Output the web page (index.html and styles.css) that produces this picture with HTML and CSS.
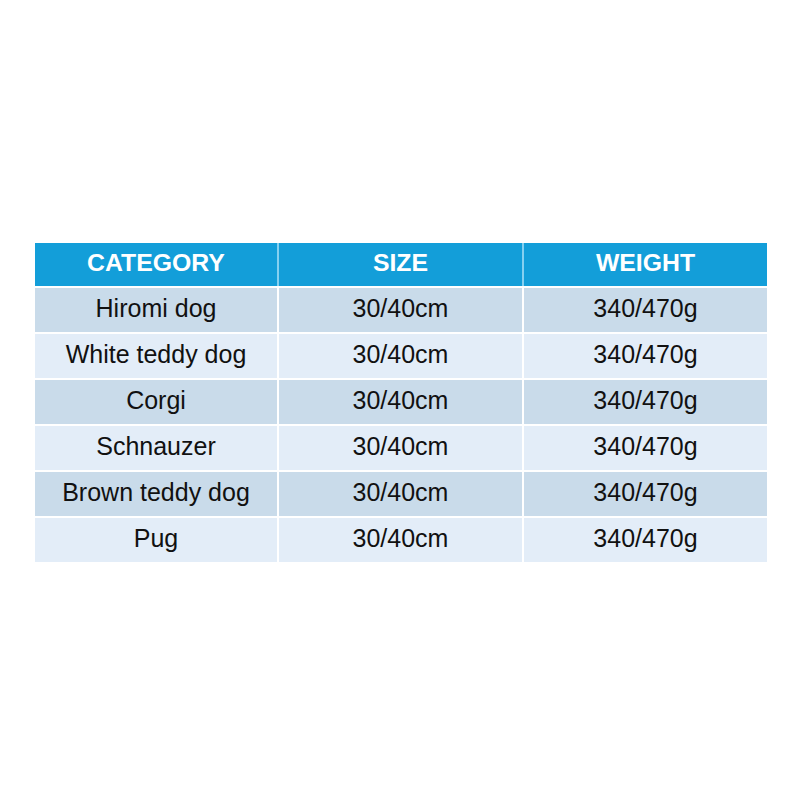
FILE: index.html
```html
<!DOCTYPE html>
<html>
<head>
<meta charset="utf-8">
<link rel="stylesheet" href="styles.css">
</head>
<body>
<div class="page">
  <div class="table">
    <div class="cell head sep">CATEGORY</div>
    <div class="cell head sep">SIZE</div>
    <div class="cell head">WEIGHT</div>

    <div class="cell odd">Hiromi dog</div>
    <div class="cell odd">30/40cm</div>
    <div class="cell odd">340/470g</div>

    <div class="cell even">White teddy dog</div>
    <div class="cell even">30/40cm</div>
    <div class="cell even">340/470g</div>

    <div class="cell odd">Corgi</div>
    <div class="cell odd">30/40cm</div>
    <div class="cell odd">340/470g</div>

    <div class="cell even">Schnauzer</div>
    <div class="cell even">30/40cm</div>
    <div class="cell even">340/470g</div>

    <div class="cell odd">Brown teddy dog</div>
    <div class="cell odd">30/40cm</div>
    <div class="cell odd">340/470g</div>

    <div class="cell even">Pug</div>
    <div class="cell even">30/40cm</div>
    <div class="cell even">340/470g</div>
  </div>
</div>
</body>
</html>
```

FILE: styles.css
```css
html, body {
  margin: 0;
  padding: 0;
  background: #ffffff;
}
.page {
  width: 800px;
  height: 800px;
  padding-top: 243px;
  padding-left: 35px;
  box-sizing: border-box;
  font-family: "Liberation Sans", Arial, sans-serif;
}
.table {
  display: grid;
  grid-template-columns: 242px 243px 243px;
  grid-template-rows: 43px repeat(6, 44px);
  column-gap: 2px;
  row-gap: 2px;
  width: 732px;
}
.cell {
  display: flex;
  align-items: center;
  justify-content: center;
  padding-bottom: 3px;
  box-sizing: border-box;
  font-size: 25px;
  color: #111111;
}
.head {
  background: #139ed9;
  color: #ffffff;
  font-weight: bold;
  font-size: 24.8px;
}
.sep {
  box-shadow: 2px 0 0 #86d0f0;
}
.odd {
  background: #c9dbea;
}
.even {
  background: #e3edf8;
}
```
